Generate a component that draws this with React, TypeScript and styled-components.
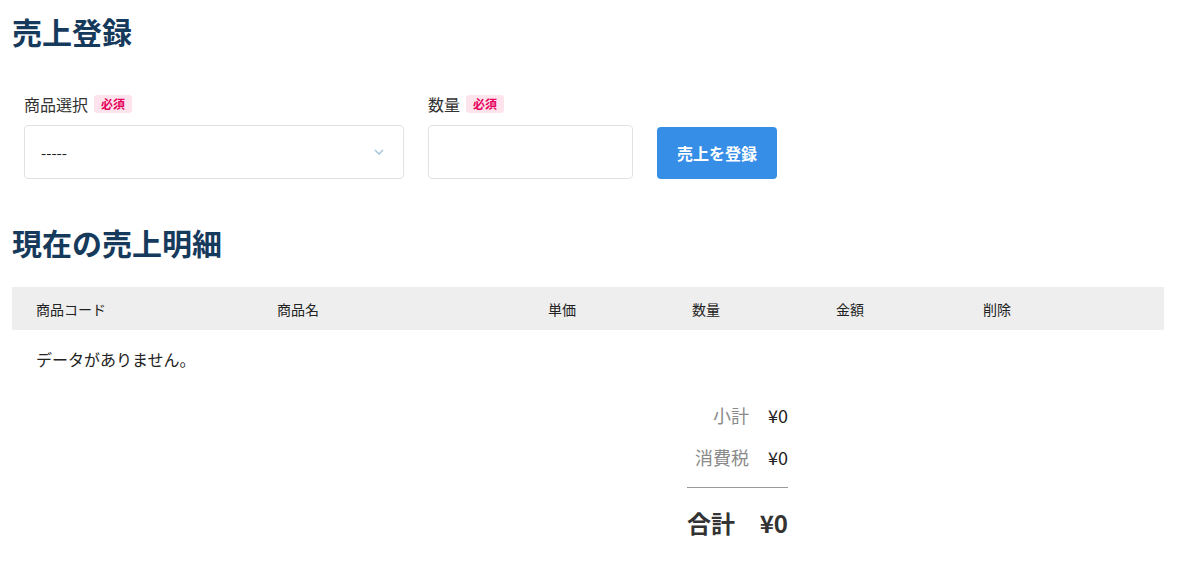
import styled, { createGlobalStyle } from "styled-components";

const GlobalStyle = createGlobalStyle`
  html, body {
    margin: 0;
    padding: 0;
    background: #ffffff;
  }
  body {
    font-family: "Noto Sans CJK JP", "Noto Sans", "Liberation Sans", sans-serif;
    color: #222222;
  }
`

const Page = styled.div`
  padding: 11px 16px 0 12px;
`

const Heading = styled.h1<{ $top?: number }>`
  margin: ${props => props.$top ?? 0}px 0 0;
  font-size: 30px;
  line-height: 40px;
  font-weight: 700;
  color: #163a5c;
`

const Form = styled.form`
  display: flex;
  align-items: flex-end;
  gap: 24px;
  margin-top: 42px;
  padding-left: 12px;
`

const Field = styled.div`
  display: flex;
  flex-flow: column;
  gap: 10px;
`

const Label = styled.label`
  display: flex;
  align-items: center;
  gap: 6px;
  font-size: 16px;
  line-height: 22px;
  color: #333333;
`

const Badge = styled.span`
  display: inline-flex;
  align-items: center;
  height: 18px;
  padding: 0 7px;
  border-radius: 3px;
  background: #fde4ec;
  color: #e6005c;
  font-size: 12px;
  font-weight: 700;
`

const Box = styled.div<{ $width: number }>`
  box-sizing: border-box;
  width: ${props => props.$width}px;
  height: 54px;
  border: 1px solid #e2e2e2;
  border-radius: 4px;
  display: flex;
  align-items: center;
  padding: 0 16px;
  font-size: 15px;
  color: #222222;
  background: #ffffff;
`

const Chevron = styled.svg`
  margin-left: auto;
  margin-right: 3px;
`

const Button = styled.button`
  width: 120px;
  height: 52px;
  border: none;
  border-radius: 4px;
  background: #368ee7;
  color: #ffffff;
  font-family: inherit;
  font-size: 16px;
  font-weight: 700;
  cursor: pointer;
`

const Table = styled.div`
  margin-top: 25px;
  width: 1152px;
`

const HeadRow = styled.div`
  display: grid;
  grid-template-columns: 241px 271px 144px 144px 147px 1fr;
  height: 43px;
  align-items: center;
  padding-left: 24px;
  background: #eeeeee;
  font-size: 14px;
  color: #222222;
`

const EmptyRow = styled.div`
  height: 58px;
  display: flex;
  align-items: center;
  padding-left: 24px;
  font-size: 16px;
  color: #222222;
`

const Summary = styled.div`
  margin: 6px 0 0 675px;
  width: 101px;
`

const SubRow = styled.div`
  display: flex;
  justify-content: flex-end;
  align-items: center;
  gap: 19px;
  height: 42px;
`

const SubLabel = styled.span`
  font-size: 18px;
  color: #8a8a8a;
`

const SubValue = styled.span`
  font-size: 18px;
  color: #222222;
`

const Rule = styled.hr`
  margin: 9px 0 0;
  border: none;
  border-top: 1px solid #999999;
`

const TotalRow = styled.div`
  display: flex;
  justify-content: space-between;
  align-items: center;
  height: 36px;
  margin-top: 16px;
  font-size: 24px;
  font-weight: 700;
  color: #333333;
`

const columns = ["商品コード", "商品名", "単価", "数量", "金額", "削除"]

export default function App() {
  return (
    <>
      <GlobalStyle />
      <Page>
        <Heading>売上登録</Heading>
        <Form onSubmit={e => e.preventDefault()}>
          <Field>
            <Label>商品選択<Badge>必須</Badge></Label>
            <Box $width={380}>
              -----
              <Chevron width="10" height="6" viewBox="0 0 10 6">
                <path d="M1 1 L5 5 L9 1" fill="none" stroke="#a6c8da" strokeWidth="1.6" />
              </Chevron>
            </Box>
          </Field>
          <Field>
            <Label>数量<Badge>必須</Badge></Label>
            <Box $width={205} />
          </Field>
          <Button type="submit">売上を登録</Button>
        </Form>

        <Heading as="h2" $top={43}>現在の売上明細</Heading>
        <Table>
          <HeadRow>
            {columns.map(c => <div key={c}>{c}</div>)}
          </HeadRow>
          <EmptyRow>データがありません。</EmptyRow>
        </Table>

        <Summary>
          <SubRow>
            <SubLabel>小計</SubLabel>
            <SubValue>¥0</SubValue>
          </SubRow>
          <SubRow>
            <SubLabel>消費税</SubLabel>
            <SubValue>¥0</SubValue>
          </SubRow>
          <Rule />
          <TotalRow>
            <span>合計</span>
            <span>¥0</span>
          </TotalRow>
        </Summary>
      </Page>
    </>
  )
}
